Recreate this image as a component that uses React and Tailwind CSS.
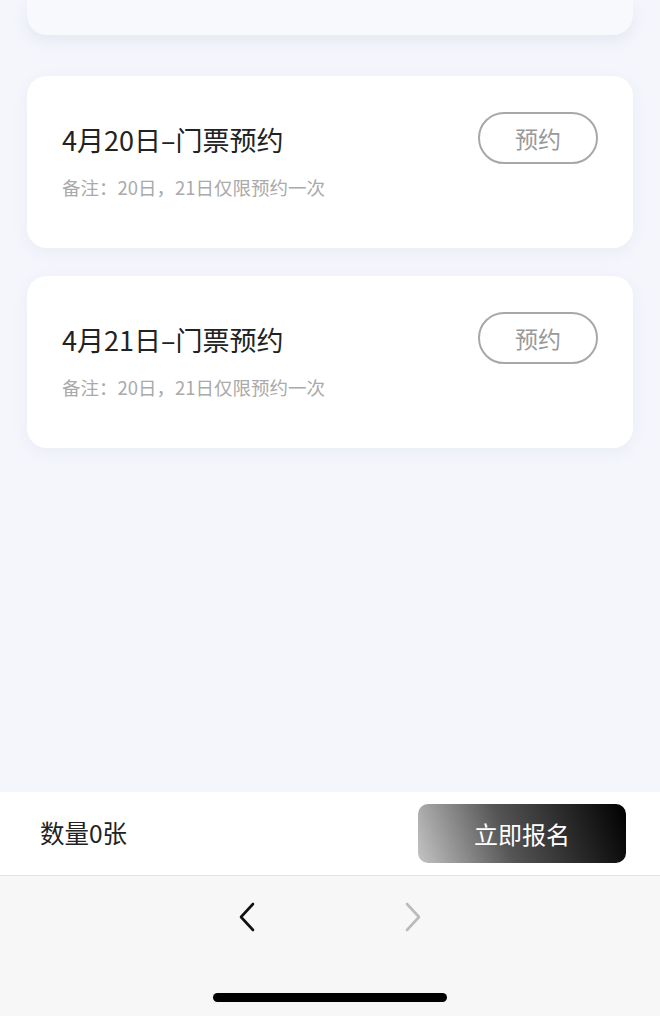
export default function App() {
  const items = ["4月20日–门票预约", "4月21日–门票预约"];

  return (
    <div
      className="w-[660px] h-[1016px] flex flex-col bg-[#f5f6fc] overflow-hidden"
      style={{ fontFamily: '"Noto Sans CJK SC", "Noto Sans", sans-serif' }}
    >
      <div className="h-[792px] flex flex-col px-[27px] gap-[28px]">
        <div className="h-[35px] mb-[13px] bg-[#f8f9fd] rounded-b-[20px] shadow-[0_6px_14px_rgba(200,205,225,0.35)]" />
        {items.map((t, i) => (
          <div
            key={i}
            className="h-[172px] bg-white rounded-[20px] flex items-start justify-between pl-[35px] pr-[35px] pt-[36px] shadow-[0_4px_14px_rgba(210,214,232,0.3)]"
          >
            <div className="flex flex-col mt-[8px]">
              <div className="text-[27px] leading-[40px] text-[#222]">{t}</div>
              <div className="text-[18.5px] leading-[28px] mt-[13px] text-[#aaa]">
                备注：20日，21日仅限预约一次
              </div>
            </div>
            <button className="w-[120px] h-[52px] rounded-full border-2 border-[#a8a8a8] text-[23px] text-[#999] flex items-center justify-center">
              预约
            </button>
          </div>
        ))}
      </div>

      <div className="h-[84px] bg-white flex items-center justify-between pl-[40px] pr-[34px] border-b border-[#e4e4e4]">
        <div className="text-[24.5px] text-[#222]">数量0张</div>
        <button className="w-[208px] h-[59px] rounded-[10px] bg-[linear-gradient(70deg,#c4c4c4_0%,#555_42%,#000_100%)] text-white text-[24px] flex items-center justify-center">
          立即报名
        </button>
      </div>

      <div className="flex-1 bg-[#f7f7f7] flex flex-col items-center">
        <div className="flex items-center gap-[140px] mt-[25px]">
          <svg width="24" height="32" viewBox="0 0 24 32" fill="none">
            <path d="M17 3 L5 16 L17 29" stroke="#111" strokeWidth="2.6" strokeLinecap="round" strokeLinejoin="round" />
          </svg>
          <svg width="24" height="32" viewBox="0 0 24 32" fill="none">
            <path d="M7 3 L19 16 L7 29" stroke="#bbb" strokeWidth="2.6" strokeLinecap="round" strokeLinejoin="round" />
          </svg>
        </div>
        <div className="mt-[60px] w-[234px] h-[9px] rounded-full bg-black" />
      </div>
    </div>
  );
}
